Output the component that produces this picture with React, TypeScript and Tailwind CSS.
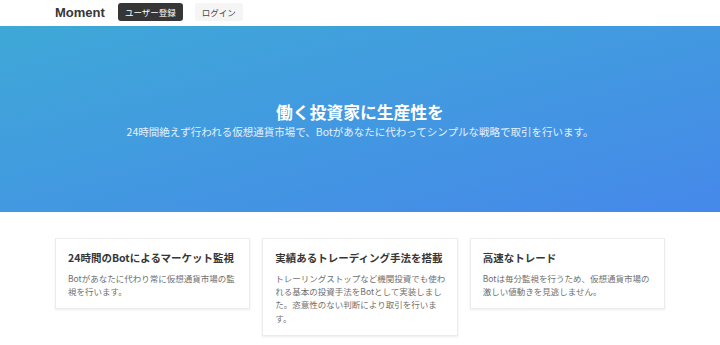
const features = [
  {
    title: "24時間のBotによるマーケット監視",
    body: "Botがあなたに代わり常に仮想通貨市場の監視を行います。",
  },
  {
    title: "実績あるトレーディング手法を搭載",
    body: "トレーリングストップなど機関投資でも使われる基本の投資手法をBotとして実装しました。恣意性のない判断により取引を行います。",
  },
  {
    title: "高速なトレード",
    body: "Botは毎分監視を行うため、仮想通貨市場の激しい値動きを見逃しません。",
  },
];

export default function App() {
  return (
    <div
      className="min-h-[345px] w-[720px] bg-white text-[#333]"
      style={{ fontFamily: '"Noto Sans CJK JP", "Liberation Sans", sans-serif' }}
    >
      <header className="mx-auto flex h-[26px] w-[610px] items-start gap-[13px] pt-[3px]">
        <span
          className="mt-[1px] text-[13px] font-bold leading-[17px] text-[#363636]"
          style={{ fontFamily: '"Liberation Sans", "Noto Sans CJK JP", sans-serif' }}
        >
          Moment
        </span>
        <div className="flex gap-[12px]">
          <button
            type="button"
            className="flex h-[18px] w-[65px] items-center justify-center rounded-[3px] bg-[#363636] text-[8.5px] text-white"
          >
            ユーザー登録
          </button>
          <button
            type="button"
            className="flex h-[18px] w-[48px] items-center justify-center rounded-[3px] bg-[#f5f5f5] text-[8.5px] text-[#4a4a4a]"
          >
            ログイン
          </button>
        </div>
      </header>

      <section className="flex h-[186px] flex-col items-center justify-center bg-gradient-to-br from-[#3fa8d7] to-[#4688ea] text-white">
        <h1 className="text-[16.8px] font-bold leading-[24px]">働く投資家に生産性を</h1>
        <p className="text-[10.5px] leading-[15px] text-white/85">
          24時間絶えず行われる仮想通貨市場で、Botがあなたに代わってシンプルな戦略で取引を行います。
        </p>
      </section>

      <section className="mx-auto grid w-[610px] grid-cols-3 items-start gap-[12px] pt-[26px]">
        {features.map((f) => (
          <div
            key={f.title}
            className="border border-[#ececec] bg-white pt-[11px] pr-[10px] pb-[10px] pl-[12px] shadow-[0_1px_2px_rgba(10,10,10,0.08)]"
          >
            <h2 className="text-[10.5px] font-bold leading-[16px] text-[#363636]">{f.title}</h2>
            <p className="mt-[6px] text-[8.5px] leading-[13.2px] text-[#707070]">{f.body}</p>
          </div>
        ))}
      </section>
    </div>
  );
}
